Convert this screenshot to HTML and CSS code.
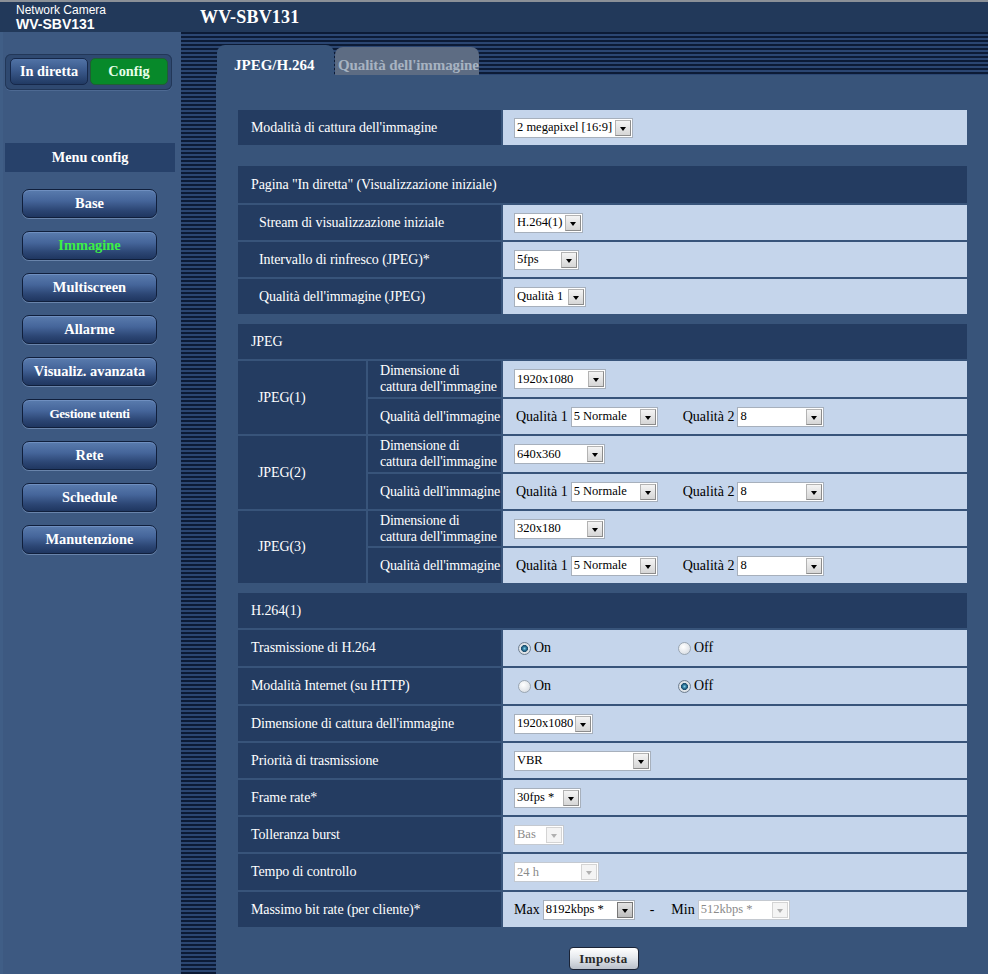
FILE: index.html
```html
<!DOCTYPE html>
<html lang="it">
<head>
<meta charset="utf-8">
<title>WV-SBV131</title>
<link rel="stylesheet" href="styles.css">
</head>
<body>
<header class="topbar">
  <div class="brand">
    <div class="brand-sub">Network Camera</div>
    <div class="brand-model">WV-SBV131</div>
  </div>
  <div class="title">WV-SBV131</div>
</header>
<div class="main">
  <aside class="sidebar">
    <div class="modebar">
      <span class="mode-btn">In diretta</span>
      <span class="mode-btn active">Config</span>
    </div>
    <div class="menu-title">Menu config</div>
    <nav class="menu">
      <span class="menu-btn">Base</span>
      <span class="menu-btn current">Immagine</span>
      <span class="menu-btn">Multiscreen</span>
      <span class="menu-btn">Allarme</span>
      <span class="menu-btn">Visualiz. avanzata</span>
      <span class="menu-btn narrow">Gestione utenti</span>
      <span class="menu-btn">Rete</span>
      <span class="menu-btn">Schedule</span>
      <span class="menu-btn">Manutenzione</span>
    </nav>
  </aside>
  <section class="workspace">
    <div class="tabs">
      <div class="tab current">JPEG/H.264</div>
      <div class="tab other">Qualità dell'immagine</div>
    </div>
    <div class="panel">
      <div class="sect s-capture">
        <div class="c lbl">Modalità di cattura dell'immagine</div>
        <div class="c val"><span class="sel w119"><span class="sel-text">2 megapixel [16:9]</span><span class="sel-btn"></span></span></div>
      </div>

      <div class="sect s-live">
        <div class="c head">Pagina "In diretta" (Visualizzazione iniziale)</div>
        <div class="c lbl sub">Stream di visualizzazione iniziale</div>
        <div class="c val"><span class="sel w69"><span class="sel-text">H.264(1)</span><span class="sel-btn"></span></span></div>
        <div class="c lbl sub">Intervallo di rinfresco (JPEG)*</div>
        <div class="c val"><span class="sel w65"><span class="sel-text">5fps</span><span class="sel-btn"></span></span></div>
        <div class="c lbl sub">Qualità dell'immagine (JPEG)</div>
        <div class="c val"><span class="sel w72"><span class="sel-text">Qualità 1</span><span class="sel-btn"></span></span></div>
      </div>

      <div class="sect jpeg s-jpeg">
        <div class="c head">JPEG</div>

        <div class="c lbl grp">JPEG(1)</div>
        <div class="c lbl two tall">Dimensione di<br>cattura dell'immagine</div>
        <div class="c val tall"><span class="sel w92"><span class="sel-text">1920x1080</span><span class="sel-btn"></span></span></div>
        <div class="c lbl two">Qualità dell'immagine</div>
        <div class="c val"><span class="q">Qualità 1</span><span class="sel w87"><span class="sel-text">5 Normale</span><span class="sel-btn"></span></span><span class="q q2">Qualità 2</span><span class="sel w87"><span class="sel-text">8</span><span class="sel-btn"></span></span></div>

        <div class="c lbl grp">JPEG(2)</div>
        <div class="c lbl two tall">Dimensione di<br>cattura dell'immagine</div>
        <div class="c val tall"><span class="sel w91"><span class="sel-text">640x360</span><span class="sel-btn"></span></span></div>
        <div class="c lbl two">Qualità dell'immagine</div>
        <div class="c val"><span class="q">Qualità 1</span><span class="sel w87"><span class="sel-text">5 Normale</span><span class="sel-btn"></span></span><span class="q q2">Qualità 2</span><span class="sel w87"><span class="sel-text">8</span><span class="sel-btn"></span></span></div>

        <div class="c lbl grp">JPEG(3)</div>
        <div class="c lbl two">Dimensione di<br>cattura dell'immagine</div>
        <div class="c val"><span class="sel w91"><span class="sel-text">320x180</span><span class="sel-btn"></span></span></div>
        <div class="c lbl two">Qualità dell'immagine</div>
        <div class="c val"><span class="q">Qualità 1</span><span class="sel w87"><span class="sel-text">5 Normale</span><span class="sel-btn"></span></span><span class="q q2">Qualità 2</span><span class="sel w87"><span class="sel-text">8</span><span class="sel-btn"></span></span></div>
      </div>

      <div class="sect s-h264">
        <div class="c head">H.264(1)</div>
        <div class="c lbl tall">Trasmissione di H.264</div>
        <div class="c val tall"><span class="opt"><span class="radio on"></span>On</span><span class="opt"><span class="radio"></span>Off</span></div>
        <div class="c lbl tall">Modalità Internet (su HTTP)</div>
        <div class="c val tall"><span class="opt"><span class="radio"></span>On</span><span class="opt"><span class="radio on"></span>Off</span></div>
        <div class="c lbl">Dimensione di cattura dell'immagine</div>
        <div class="c val"><span class="sel w79"><span class="sel-text">1920x1080</span><span class="sel-btn"></span></span></div>
        <div class="c lbl">Priorità di trasmissione</div>
        <div class="c val"><span class="sel w137"><span class="sel-text">VBR</span><span class="sel-btn"></span></span></div>
        <div class="c lbl">Frame rate*</div>
        <div class="c val"><span class="sel w67"><span class="sel-text">30fps *</span><span class="sel-btn"></span></span></div>
        <div class="c lbl">Tolleranza burst</div>
        <div class="c val"><span class="sel w50 off"><span class="sel-text">Bas</span><span class="sel-btn"></span></span></div>
        <div class="c lbl tall">Tempo di controllo</div>
        <div class="c val tall"><span class="sel w85 off"><span class="sel-text">24 h</span><span class="sel-btn"></span></span></div>
        <div class="c lbl">Massimo bit rate (per cliente)*</div>
        <div class="c val"><span class="mm">Max</span><span class="sel w92 dark"><span class="sel-text">8192kbps *</span><span class="sel-btn"></span></span><span class="dash">-</span><span class="mm">Min</span><span class="sel w92 off"><span class="sel-text">512kbps *</span><span class="sel-btn"></span></span></div>
      </div>

      <div class="actions"><button class="submit" type="button">Imposta</button></div>
    </div>
  </section>
</div>
</body>
</html>
```
FILE: styles.css
```css
html, body {
  margin: 0;
  padding: 0;
}
body {
  background: #38547a;
  font-family: "Liberation Serif", "Times New Roman", serif;
  height: 974px;
  overflow: hidden;
}

/* ---------- top bar ---------- */
.topbar {
  height: 30px;
  border-top: 2px solid #8b9097;
  background: #22395a;
  display: flex;
  align-items: center;
  color: #fff;
}
.brand {
  width: 184px;
  padding-left: 16px;
  font-family: "Liberation Sans", Arial, sans-serif;
}
.brand-sub {
  font-size: 12px;
  line-height: 13px;
}
.brand-model {
  font-size: 14px;
  font-weight: bold;
  line-height: 14px;
}
.title {
  font-size: 18px;
  font-weight: bold;
  letter-spacing: 0.2px;
}

/* ---------- main ---------- */
.main {
  display: flex;
  height: 942px;
}

.sidebar {
  width: 181px;
  flex: none;
  background: #3d5981;
  padding-top: 22px;
  box-sizing: border-box;
  border-left: 3px solid #405e86;
}
.modebar {
  margin: 0 9px 0 2px;
  height: 36px;
  box-sizing: border-box;
  padding: 4px 4px 4px 5px;
  background: #2f4970;
  border-radius: 6px;
  box-shadow: inset 0 0 0 1px #223758, 0 1px 0 #4d6992;
  display: flex;
  gap: 2px;
}
.mode-btn {
  width: 78px;
  height: 27px;
  box-sizing: border-box;
  border-radius: 5px;
  display: flex;
  align-items: center;
  justify-content: center;
  font-size: 14.3px;
  font-weight: bold;
  color: #fff;
  border: 1px solid #16284a;
  background: linear-gradient(#5173a6 0%, #3b5a8c 45%, #213a63 100%);
}
.mode-btn.active {
  background: #07892a;
  border-color: #1f5e34;
  color: #e8ffe8;
}
.menu-title {
  margin: 53px 6px 0 2px;
  height: 29px;
  background: #27416a;
  display: flex;
  align-items: center;
  justify-content: center;
  color: #fff;
  font-size: 14.3px;
  font-weight: bold;
}
.menu {
  margin-top: 17px;
  padding-left: 19px;
  display: flex;
  flex-direction: column;
  align-items: flex-start;
  gap: 13px;
}
.menu-btn {
  width: 135px;
  height: 29px;
  box-sizing: border-box;
  border-radius: 7px;
  border: 1px solid #101f3c;
  background: linear-gradient(#5a7cae 0%, #45659a 40%, #2c4674 75%, #1f3660 100%);
  box-shadow: 0 1px 0 #6984ab, inset 0 1px 0 #6f8fc0;
  display: flex;
  align-items: center;
  justify-content: center;
  color: #fff;
  font-size: 14.4px;
  font-weight: bold;
}
.menu-btn.current {
  color: #3cf046;
}
.menu-btn.narrow {
  font-size: 13.2px;
  letter-spacing: -0.35px;
}

/* ---------- workspace ---------- */
.workspace {
  flex: 1;
  display: flex;
  flex-direction: column;
  background: repeating-linear-gradient(to bottom, #0c1b36 0 2px, #2b4672 2px 4px);
}
.tabs {
  height: 43px;
  flex: none;
  display: flex;
  align-items: flex-end;
  padding-left: 36px;
}
.tab {
  box-sizing: border-box;
  display: flex;
  align-items: center;
  font-size: 15px;
  font-weight: bold;
  border-radius: 8px 8px 0 0;
}
.tab.current {
  width: 117px;
  height: 30px;
  padding-left: 17px;
  padding-top: 10px;
  background: #38547a;
  color: #fff;
}
.tab.other {
  height: 28px;
  margin-left: 1px;
  padding: 8px 0 0 3px;
  background: #5d6c83;
  color: #a7b3c1;
  letter-spacing: -0.1px;
}
.panel {
  flex: 1;
  margin-left: 35px;
  background: #38547a;
  padding: 35px 0 0 22px;
}

.sect {
  display: grid;
  grid-template-columns: 263px 464px;
  grid-auto-rows: minmax(35px, auto);
  gap: 2px;
}
.sect.jpeg {
  grid-template-columns: 128px 133px 464px;
}
.s-live { margin-top: 21px; }
.s-jpeg { margin-top: 10px; }
.s-h264 { margin-top: 10px; }
.s-live .head { min-height: 37px; }

.c {
  display: flex;
  align-items: center;
  box-sizing: border-box;
  font-size: 14px;
  white-space: nowrap;
}
.c.tall { min-height: 36px; }
.head, .lbl {
  background: #243c61;
  color: #fff;
  padding-left: 13px;
  letter-spacing: -0.1px;
}
.head {
  grid-column: 1 / -1;
}
.lbl.sub { padding-left: 21px; }
.lbl.grp {
  grid-row: span 2;
  padding-left: 20px;
}
.lbl.two {
  padding-left: 12px;
  line-height: 16px;
  letter-spacing: -0.2px;
}
.val {
  background: #c5d5eb;
  color: #000;
  padding-left: 11px;
}

/* fake select */
.sel {
  display: inline-flex;
  align-items: center;
  height: 20px;
  box-sizing: border-box;
  border: 1px solid #a7b0bc;
  background: #fff;
  font-size: 12.5px;
  color: #000;
}
.sel-text {
  flex: 1;
  padding-left: 2px;
  overflow: hidden;
}
.sel-btn {
  position: relative;
  flex: none;
  width: 16px;
  height: 16px;
  margin-right: 1px;
  box-sizing: border-box;
  border: 1px solid #b3b3b3;
  border-right-color: #8c8c8c;
  border-bottom-color: #8c8c8c;
  background: linear-gradient(#f4f4f4, #d6d6d6);
}
.sel-btn::after {
  content: "";
  position: absolute;
  left: 4px;
  top: 6px;
  border-left: 3.5px solid transparent;
  border-right: 3.5px solid transparent;
  border-top: 4px solid #000;
}
.sel.dark .sel-btn {
  background: linear-gradient(#e4e4e4, #bdbdbd);
  border-color: #777;
}
.sel.off {
  border-color: #c4c9d0;
  color: #8a8a8a;
}
.sel.off .sel-btn {
  border-color: #d4d4d4;
  background: #f4f4f4;
}
.sel.off .sel-btn::after {
  border-top-color: #b0b0b0;
}
.w50 { width: 50px; }
.w65 { width: 65px; }
.w67 { width: 67px; }
.w69 { width: 69px; }
.w72 { width: 72px; }
.w79 { width: 79px; }
.w85 { width: 85px; }
.w87 { width: 87px; }
.w91 { width: 91px; }
.w92 { width: 92px; }
.w119 { width: 119px; }
.w137 { width: 137px; }

.q {
  font-size: 14px;
  margin-right: 3px;
  margin-left: 2px;
}
.q2 { margin-left: 25px; }
.mm {
  font-size: 14px;
  margin-right: 3px;
}
.dash {
  margin: 0 17px 0 15px;
  font-size: 14px;
}

/* radios */
.opt {
  display: inline-flex;
  align-items: center;
  width: 160px;
  font-size: 14px;
}
.radio {
  width: 13px;
  height: 13px;
  border-radius: 50%;
  box-sizing: border-box;
  margin: 0 3px 0 4px;
  border: 1px solid #9aa6b2;
  background: radial-gradient(circle at 40% 35%, #ffffff 0%, #dfe3e8 70%, #c8ced6 100%);
}
.radio.on {
  border-color: #6f7f90;
  background: radial-gradient(circle at 50% 50%, #7fd0ea 0, #2a6f92 2px, #1e4e6e 3.2px, #e2e6ea 3.8px, #cfd5dc 100%);
}

/* action */
.actions {
  width: 729px;
  display: flex;
  justify-content: center;
  margin-top: 20px;
}
.submit {
  width: 70px;
  height: 23px;
  margin-left: 2px;
  border-radius: 4px;
  border: 1px solid #1a2336;
  background: linear-gradient(#ffffff 0%, #e6e9ee 45%, #b9c0ca 100%);
  font-family: "Liberation Serif", serif;
  font-size: 13px;
  font-weight: bold;
  color: #2a2a2a;
  letter-spacing: 0.4px;
  padding: 0;
}
```
